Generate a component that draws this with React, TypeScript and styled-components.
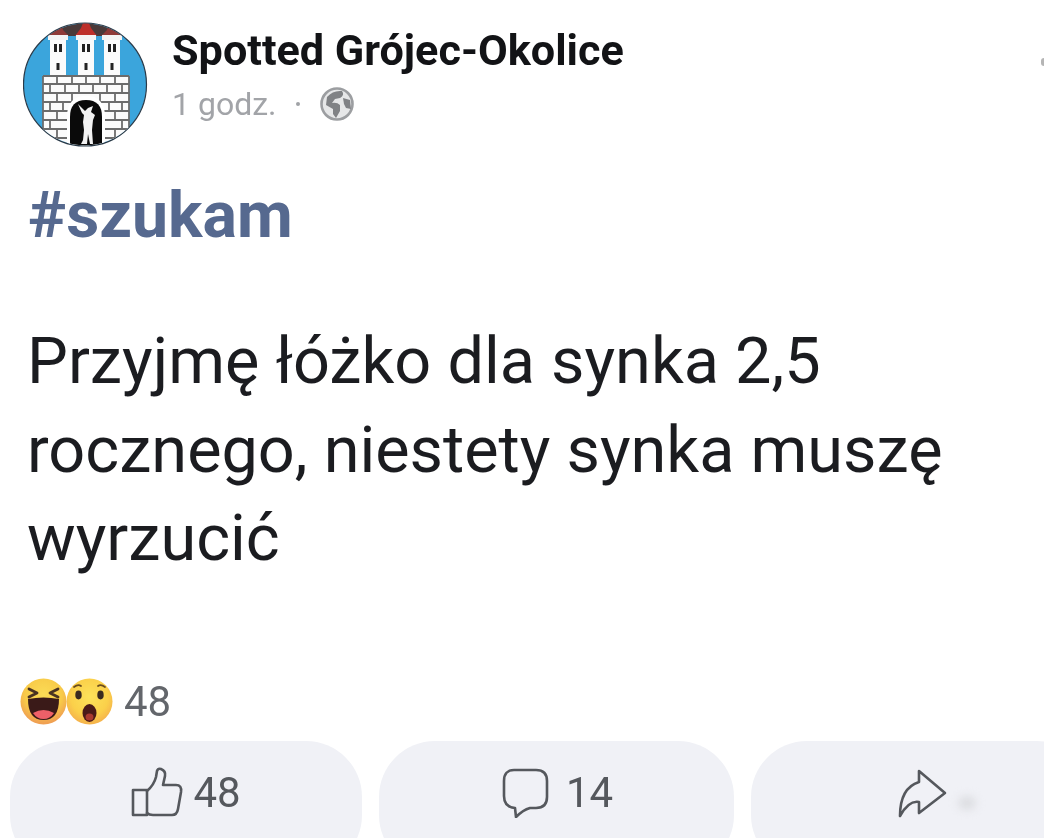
import React from "react";
import styled, { createGlobalStyle } from "styled-components";

const Global = createGlobalStyle`
  html, body { margin: 0; padding: 0; background: #fff; }
  body { font-family: Roboto, "Noto Sans", "Liberation Sans", sans-serif; }
`;

const Page = styled.div`
  position: relative;
  width: 1044px;
  height: 838px;
  overflow: hidden;
  background: #fff;
  display: flex;
  flex-direction: column;
  filter: blur(0.7px);
`;
const Header = styled.header`
  display: flex;
  align-items: flex-start;
  gap: 24px;
  padding: 22px 0 0 23px;
  height: 125px;
`;
const AvatarBox = styled.div`
  width: 125px;
  height: 125px;
  flex: none;
`;
const HeaderText = styled.div`
  display: flex;
  flex-direction: column;
  padding-top: 5px;
`;
const Name = styled.div`
  font-size: 43.2px;
  font-weight: 700;
  line-height: 48px;
  white-space: nowrap;
  color: #121316;
`;
const Meta = styled.div`
  display: flex;
  align-items: center;
  margin-top: 9px;
  font-size: 32px;
  line-height: 40px;
  color: #a2a4a8;
`;
const Dot = styled.span`
  width: 4px;
  height: 4px;
  margin: 0 20px 0 19px;
  border-radius: 50%;
  background: #a0a2a6;
`;
const MoreDot = styled.span`
  position: absolute;
  right: 0;
  top: 58px;
  width: 3px;
  height: 8px;
  border-radius: 3px 0 0 3px;
  background: #b5b5b5;
`;
const Hashtag = styled.div`
  margin: 33px 0 0 28px;
  font-size: 64.4px;
  line-height: 70px;
  font-weight: 700;
  color: #56698f;
`;
const Body = styled.div`
  margin: 67px 0 0 27px;
  font-size: 64.8px;
  line-height: 88.5px;
  white-space: nowrap;
  color: #1b1c20;
`;
const Reactions = styled.div`
  display: flex;
  align-items: center;
  margin: 95px 0 0 20px;
  height: 48px;
  font-size: 42px;
  color: #63666b;
`;
const Emoji = styled.svg`
  width: 47px;
  height: 47px;
  flex: none;
  & + & {
    margin-left: -1px;
  }
`;
const Count = styled.span`
  margin-left: 11px;
`;
const Actions = styled.div`
  display: flex;
  margin: 15px 0 0 10px;
  gap: 17px;
`;
const Pill = styled.div<{ $w: number; $gap: number }>`
  width: ${(p) => p.$w}px;
  height: 130px;
  flex: none;
  border-radius: 56px;
  background: #f0f1f6;
  display: flex;
  align-items: flex-start;
  justify-content: center;
  gap: ${(p) => p.$gap}px;
  padding-top: 25px;
  box-sizing: border-box;
  font-size: 42px;
  line-height: 50px;
  color: #55585d;
`;
const PillCount = styled.span`
  margin-top: 2px;
`;
const ActionIcon = styled.svg`
  width: 52px;
  height: 52px;
  flex: none;
  fill: none;
  stroke: #55585d;
  stroke-width: 2.6;
  stroke-linejoin: round;
  stroke-linecap: round;
`;
const Smudge = styled.span`
  position: absolute;
  left: 958px;
  top: 796px;
  width: 18px;
  height: 14px;
  border-radius: 50%;
  background: #dcdde1;
  filter: blur(4px);
`;

function Avatar() {
  const towers = [35, 63, 89];
  return (
    <svg viewBox="0 0 125 125" width="125" height="125">
      <defs>
        <clipPath id="c"><circle cx="62" cy="62.5" r="61" /></clipPath>
      </defs>
      <circle cx="62" cy="62.5" r="61.5" fill="#3ba5dc" stroke="#2a3a48" strokeWidth="1.2" />
      <g clipPath="url(#c)">
        <path d="M20 16 Q62 -16 104 16 L100 14 L24 14Z" fill="#4a3a3a" />
        {towers.map((x, i) => (
          <path key={x} d={`M${x - 11} 14 L${x - 5} ${i === 1 ? 6 : 8} L${x - 3} 1 L${x + 3} 1 L${x + 5} ${i === 1 ? 6 : 8} L${x + 11} 14Z`} fill={i === 1 ? "#bd2f2a" : "#8f3a38"} />
        ))}
        {towers.map((c) => (
          <g key={c}>
            <rect x={c - 10} y={13} width={20} height={5} fill="#f4f4f4" />
            <rect x={c - 8} y={18} width={16} height={37} fill="#fbfbfb" />
            <rect x={c - 4} y={22} width={3} height={8} fill="#222" />
            <rect x={c + 1} y={22} width={3} height={8} fill="#222" />
            <rect x={c - 1.5} y={41} width={3} height={7} fill="#222" />
          </g>
        ))}
        <rect x="20" y="54" width="86" height="71" fill="#fbfbfb" />
        <g stroke="#6c6c6c" strokeWidth="1.8" fill="none">
          <path d="M20 54 H106 M20 62 H106 M20 71 H106 M20 80 H106 M20 89 H106 M20 98 H106 M20 107 H106 M20 116 H106" />
          <path d="M34 54 V62 M49 54 V62 M63 54 V62 M77 54 V62 M92 54 V62 M27 62 V71 M42 62 V71 M56 62 V71 M70 62 V71 M84 62 V71 M99 62 V71 M34 71 V80 M49 71 V80 M77 71 V80 M92 71 V80 M27 80 V89 M40 80 V89 M86 80 V89 M99 80 V89 M34 89 V98 M92 89 V98 M27 98 V107 M99 98 V107 M34 107 V116 M92 107 V116 M27 116 V125 M99 116 V125" />
          <path d="M20 54 V118 M106 54 V118" />
        </g>
        <path d="M44 125 V95 Q44 74 63 74 Q82 74 82 95 V125Z" fill="#fff" />
        <path d="M47 125 V95 Q47 78 63 78 Q79 78 79 95 V125Z" fill="#0a0a0a" />
        <path d="M55 82 L59 91 L61 93 L60 100 L61 108 L60 118 L58 122 L64 122 L65 112 L67 122 L70 122 L69 108 L70 98 L72 93 L68 90 L70 84 L65 86 L62 89Z" fill="#f2f2f2" />
      </g>
    </svg>
  );
}

function Globe() {
  return (
    <svg width="34" height="34" viewBox="0 0 34 34">
      <circle cx="17" cy="17" r="15.5" fill="#e6e7e8" stroke="#9c9ea1" strokeWidth="2.6" />
      <path d="M7 10 Q13 3 22 4 Q25 8 20 11 L15 12 L12 16 Q17 15 20 18 L20 24 L16 31 L13 27 L13 22 L6 18Z" fill="#808285" />
      <path d="M23 11 L30 13 L31 22 L26 21 L24 17Z" fill="#808285" />
    </svg>
  );
}

function Laugh() {
  return (
    <Emoji viewBox="0 0 47 47">
      <defs>
        <radialGradient id="lg" cx="50%" cy="35%" r="62%">
          <stop offset="0%" stopColor="#fbdc56" />
          <stop offset="65%" stopColor="#f8ca48" />
          <stop offset="100%" stopColor="#f0a052" />
        </radialGradient>
      </defs>
      <circle cx="23.5" cy="23.5" r="23" fill="url(#lg)" />
      <path d="M9 11 L17 15 L9 19 M38 11 L30 15 L38 19" fill="none" stroke="#4a3322" strokeWidth="2.8" strokeLinecap="round" strokeLinejoin="round" />
      <path d="M8 21 Q23.5 18 39 21 Q39 42 23.5 42 Q8 42 8 21Z" fill="#3a1a18" />
      <path d="M13 35 Q23.5 29 34 35 Q30 41 23.5 41 Q17 41 13 35Z" fill="#ee6068" />
    </Emoji>
  );
}

function Wow() {
  return (
    <Emoji viewBox="0 0 47 47">
      <defs>
        <radialGradient id="wg" cx="50%" cy="40%" r="62%">
          <stop offset="0%" stopColor="#fde25a" />
          <stop offset="65%" stopColor="#fbd04a" />
          <stop offset="100%" stopColor="#f4ae4c" />
        </radialGradient>
      </defs>
      <circle cx="23.5" cy="23.5" r="23" fill="url(#wg)" />
      <ellipse cx="12.5" cy="17" rx="3.2" ry="4.4" fill="#3a2a20" />
      <ellipse cx="34.5" cy="17" rx="3.2" ry="4.4" fill="#3a2a20" />
      <path d="M8 9 Q12 6 15 8 M32 8 Q35 6 39 9" fill="none" stroke="#6a4d20" strokeWidth="1.8" strokeLinecap="round" />
      <ellipse cx="23.5" cy="35" rx="7" ry="9" fill="#4a1a18" />
      <ellipse cx="23.5" cy="39" rx="4" ry="3.6" fill="#a93a30" />
    </Emoji>
  );
}

export default function App() {
  return (
    <Page>
      <Global />
      <Header>
        <AvatarBox><Avatar /></AvatarBox>
        <HeaderText>
          <Name>Spotted Grójec-Okolice</Name>
          <Meta>
            <span>1 godz.</span>
            <Dot />
            <Globe />
          </Meta>
        </HeaderText>
      </Header>
      <MoreDot />
      <Hashtag>#szukam</Hashtag>
      <Body>
        Przyjmę łóżko dla synka 2,5
        <br />
        rocznego, niestety synka muszę
        <br />
        wyrzucić
      </Body>
      <Reactions>
        <Laugh />
        <Wow />
        <Count>48</Count>
      </Reactions>
      <Actions>
        <Pill $w={352} $gap={10}>
          <ActionIcon viewBox="0 0 52 52">
            <path d="M2 24 H16 V49 H2Z" />
            <path d="M16 25 Q23 19 25 11 L26 5 Q27 2 30 3 Q35 5 34 10 L32 19 H45 Q51 19 50 26 L47 43 Q46 49 41 49 H22 Q18 49 16 47" />
          </ActionIcon>
          <PillCount>48</PillCount>
        </Pill>
        <Pill $w={355} $gap={14}>
          <ActionIcon viewBox="0 0 52 52">
            <path d="M14 4 H36 Q47 4 47 15 V31 Q47 42 36 42 H30 Q23 44 16 51 L15 42 Q4 41 4 30 V15 Q4 4 14 4Z" />
          </ActionIcon>
          <PillCount>14</PillCount>
        </Pill>
        <Pill $w={342} $gap={0}>
          <ActionIcon viewBox="0 0 52 52">
            <path d="M23 5 L49 27 L23 47 L23 36 Q13 34 4 50 Q4 22 23 16Z" />
          </ActionIcon>
        </Pill>
      </Actions>
      <Smudge />
    </Page>
  );
}
